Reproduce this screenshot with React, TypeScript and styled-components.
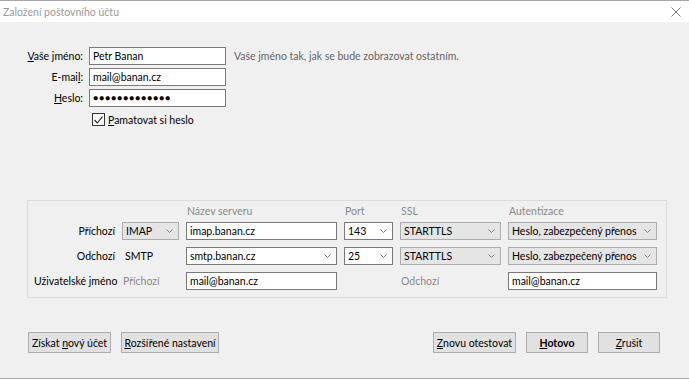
import React from 'react';
import styled, { createGlobalStyle } from 'styled-components';

const GlobalStyle = createGlobalStyle`
  html, body {
    margin: 0;
    padding: 0;
    background: #f0f0f0;
  }
  body {
    font-family: 'Lato', 'Noto Sans', sans-serif;
    font-size: 10.5px;
    color: #000;
  }
`;

const COLUMNS = '81px 57px 151px 49px 101px 149px';

const Chevron = () => (
  <svg width="7" height="4" viewBox="0 0 7 4">
    <polyline points="0.5,0.5 3.5,3.5 6.5,0.5" fill="none" stroke="#808080" strokeWidth="1" />
  </svg>
);

const CloseIcon = () => (
  <svg width="10" height="10" viewBox="0 0 10 10">
    <path d="M0.5 0.5 L9.5 9.5 M9.5 0.5 L0.5 9.5" stroke="#777" strokeWidth="1" />
  </svg>
);

const Window = styled.div`
  width: 689px;
  height: 379px;
  box-sizing: border-box;
  border-top: 1px solid #a9a9a9;
  border-bottom: 1px solid #a9a9a9;
  background: #f0f0f0;
  display: flex;
  flex-direction: column;
  overflow: hidden;
`;

const TitleBar = styled.div`
  height: 21px;
  background: #fff;
  display: flex;
  align-items: center;
  justify-content: space-between;
  padding: 0 8px 0 3px;
  color: #999;
  font-size: 10.5px;
`;

const Body = styled.div`
  flex: 1;
  display: flex;
  flex-direction: column;
  padding-top: 25px;
`;

const Form = styled.div`
  display: grid;
  grid-template-columns: 63px 137px auto;
  column-gap: 6px;
  row-gap: 3px;
  padding-left: 20px;
  align-items: center;
`;

const Label = styled.label`
  text-align: right;
  white-space: nowrap;
`;

const Hint = styled.span`
  color: #666;
  margin-left: 2px;
  white-space: nowrap;
`;

const TextBox = styled.div<{ $dots?: boolean }>`
  height: 18px;
  box-sizing: border-box;
  border: 1px solid #7a7a7a;
  background: #fff;
  display: flex;
  align-items: center;
  padding-left: 3px;
  white-space: nowrap;
  overflow: hidden;
  letter-spacing: ${(p) => (p.$dots ? '0.9px' : 'normal')};
  font-size: ${(p) => (p.$dots ? '8.5px' : '10.5px')};
`;

const CheckRow = styled.div`
  grid-column: 2 / 4;
  display: flex;
  align-items: center;
  gap: 3px;
  padding-left: 3px;
  margin-top: 3px;
`;

const CheckBox = styled.span`
  width: 13px;
  height: 13px;
  box-sizing: border-box;
  border: 1px solid #333;
  background: #fff;
  display: inline-flex;
  align-items: center;
  justify-content: center;
`;

const Key = styled.span`
  text-decoration: underline;
`;

const Panel = styled.div`
  margin: 74px 22px 0 27px;
  border: 1px solid #dcdcdc;
  padding: 0 8px 7px 6px;
  display: flex;
  flex-direction: column;
`;

const PanelHead = styled.div`
  display: grid;
  grid-template-columns: ${COLUMNS};
  column-gap: 7px;
  height: 17px;
  margin-bottom: 4px;
  align-items: end;
`;

const PanelRows = styled.div`
  display: grid;
  grid-template-columns: ${COLUMNS};
  column-gap: 7px;
  grid-auto-rows: 18px;
  row-gap: 7px;
  align-items: center;
`;

const Head = styled.span<{ $col: number }>`
  grid-column: ${(p) => p.$col};
  color: #8a8a8a;
  padding-left: 1px;
  line-height: 14px;
`;

const RowLabel = styled.span`
  grid-column: 1;
  text-align: right;
  white-space: nowrap;
`;

const Plain = styled.span<{ $muted?: boolean }>`
  color: ${(p) => (p.$muted ? '#8a8a8a' : '#000')};
  padding-left: ${(p) => (p.$muted ? '1px' : '3px')};
  white-space: nowrap;
`;

const Select = styled.div<{ $white?: boolean }>`
  height: 18px;
  box-sizing: border-box;
  border: 1px solid ${(p) => (p.$white ? '#7a7a7a' : '#acacac')};
  background: ${(p) => (p.$white ? '#fff' : '#e5e5e5')};
  display: flex;
  align-items: center;
  justify-content: space-between;
  padding: 0 5px 0 3px;
  white-space: nowrap;
  overflow: hidden;
`;

const Buttons = styled.div`
  margin-top: 34px;
  display: flex;
  padding: 0 29px 0 28px;
  gap: 10px;
`;

const Spacer = styled.div`
  flex: 1;
`;

const Button = styled.button<{ $w: number; $bold?: boolean }>`
  width: ${(p) => p.$w}px;
  height: 21px;
  box-sizing: border-box;
  border: 1px solid #adadad;
  background: #e1e1e1;
  font-family: inherit;
  font-size: 10.5px;
  font-weight: ${(p) => (p.$bold ? 700 : 400)};
  color: #000;
  padding: 0;
  white-space: nowrap;
  text-align: center;
`;

const App = () => {
  return (
    <>
      <GlobalStyle />
      <Window>
        <TitleBar>
          <span>Založení poštovního účtu</span>
          <CloseIcon />
        </TitleBar>
        <Body>
          <Form>
            <Label><Key>V</Key>aše jméno:</Label>
            <TextBox>Petr Banan</TextBox>
            <Hint>Vaše jméno tak, jak se bude zobrazovat ostatním.</Hint>
            <Label>E-mai<Key>l</Key>:</Label>
            <TextBox>mail@banan.cz</TextBox>
            <span />
            <Label><Key>H</Key>eslo:</Label>
            <TextBox $dots>●●●●●●●●●●●●●</TextBox>
            <span />
            <CheckRow>
              <CheckBox>
                <svg width="9" height="8" viewBox="0 0 9 8">
                  <polyline points="0.5,4 3.3,7 8.5,0.7" fill="none" stroke="#222" strokeWidth="1.1" />
                </svg>
              </CheckBox>
              <span><Key>P</Key>amatovat si heslo</span>
            </CheckRow>
          </Form>

          <Panel>
            <PanelHead>
              <Head $col={3}>Název serveru</Head>
              <Head $col={4}>Port</Head>
              <Head $col={5}>SSL</Head>
              <Head $col={6}>Autentizace</Head>
            </PanelHead>
            <PanelRows>
              <RowLabel>Příchozí</RowLabel>
              <Select>IMAP<Chevron /></Select>
              <TextBox>imap.banan.cz</TextBox>
              <Select $white>143<Chevron /></Select>
              <Select>STARTTLS<Chevron /></Select>
              <Select>Heslo, zabezpečený přenos<Chevron /></Select>

              <RowLabel>Odchozí</RowLabel>
              <Plain>SMTP</Plain>
              <Select $white>smtp.banan.cz<Chevron /></Select>
              <Select $white>25<Chevron /></Select>
              <Select>STARTTLS<Chevron /></Select>
              <Select>Heslo, zabezpečený přenos<Chevron /></Select>

              <RowLabel>Uživatelské jméno</RowLabel>
              <Plain $muted>Příchozí</Plain>
              <TextBox>mail@banan.cz</TextBox>
              <span />
              <Plain $muted>Odchozí</Plain>
              <TextBox>mail@banan.cz</TextBox>
            </PanelRows>
          </Panel>

          <Buttons>
            <Button $w={83}>Získat <Key>n</Key>ový účet</Button>
            <Button $w={98}><Key>R</Key>ozšířené nastavení</Button>
            <Spacer />
            <Button $w={83}><Key>Z</Key>novu otestovat</Button>
            <Button $w={62} $bold><Key>H</Key>otovo</Button>
            <Button $w={62}><Key>Z</Key>rušit</Button>
          </Buttons>
        </Body>
      </Window>
    </>
  );
};

export default App;
